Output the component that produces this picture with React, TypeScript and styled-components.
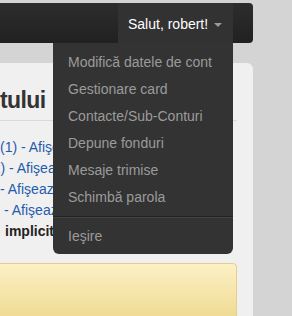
import React from "react";
import styled, { createGlobalStyle } from "styled-components";

const Global = createGlobalStyle`
  html, body {
    margin: 0;
    padding: 0;
    background: #d4d4d4;
    overflow: hidden;
    font-family: "Liberation Sans", Arial, sans-serif;
  }
  * { box-sizing: border-box; }
`;

const Page = styled.div`
  width: 292px;
  height: 316px;
  padding-top: 3px;
  overflow: hidden;
`;

const Navbar = styled.div`
  height: 40px;
  margin: 0 39px 0 -10px;
  border-radius: 4px;
  background: linear-gradient(#2d2d2d, #212121);
  display: flex;
  justify-content: flex-end;
  position: relative;
  z-index: 2;
`;

const NavItem = styled.div`
  position: relative;
  margin-right: 20px;
`;

const Toggle = styled.div`
  height: 40px;
  width: 115px;
  padding: 11px 10px 9px;
  background: #323232;
  display: flex;
  align-items: center;
  gap: 6px;
  color: #fff;
  font-size: 14px;
  line-height: 20px;
  white-space: nowrap;
`;

const Caret = styled.span`
  display: inline-block;
  width: 0;
  height: 0;
  margin-top: 1px;
  border-top: 4px solid #9a9a9a;
  border-left: 4px solid transparent;
  border-right: 4px solid transparent;
`;

const Menu = styled.ul`
  position: absolute;
  top: 100%;
  right: 0;
  width: 180px;
  margin: 0;
  padding: 6px 0 4px;
  list-style: none;
  background: #333;
  border-radius: 0 0 6px 6px;
`;

const MenuItem = styled.li`
  padding: 3px 15px;
  font-size: 14px;
  line-height: 21px;
  color: #9b9b9b;
  white-space: nowrap;
`;

const Divider = styled.li`
  height: 1px;
  margin: 5px 0;
  background: #222;
  border-bottom: 1px solid #444;
  box-sizing: content-box;
`;

const Card = styled.div`
  margin: 20px 39px 0 -20px;
  padding: 22px 16px 0 20px;
  background: #f0f0f0;
  border-radius: 6px;
  height: 400px;
`;

const Heading = styled.h2`
  margin: 0;
  font-size: 23px;
  line-height: 30px;
  font-weight: bold;
  color: #333;
  letter-spacing: -0.6px;
  white-space: nowrap;
`;

const Rule = styled.div`
  margin-top: 5px;
  border-top: 1px solid #dadada;
`;

const List = styled.div`
  margin-top: 16px;
  width: 53px;
  overflow: hidden;
  font-size: 14px;
  line-height: 21px;
`;

const Line = styled.div<{ $indent: number; $bold?: boolean }>`
  margin-left: ${(p) => p.$indent}px;
  white-space: nowrap;
  color: ${(p) => (p.$bold ? "#222" : "#1f5cab")};
  font-weight: ${(p) => (p.$bold ? "bold" : "normal")};
`;

const Alert = styled.div`
  margin-top: 21px;
  height: 60px;
  margin-left: -20px;
  border: 1px solid #e3cf8a;
  border-radius: 4px;
  background: linear-gradient(#fcf1c6, #efda90 55px);
`;

export default function App() {
  return (
    <>
      <Global />
      <Page>
        <Navbar>
          <NavItem>
            <Toggle>
              Salut, robert!
              <Caret />
            </Toggle>
            <Menu>
              <MenuItem>Modifică datele de cont</MenuItem>
              <MenuItem>Gestionare card</MenuItem>
              <MenuItem>Contacte/Sub-Conturi</MenuItem>
              <MenuItem>Depune fonduri</MenuItem>
              <MenuItem>Mesaje trimise</MenuItem>
              <MenuItem>Schimbă parola</MenuItem>
              <Divider />
              <MenuItem>Ieşire</MenuItem>
            </Menu>
          </NavItem>
        </Navbar>
        <Card>
          <Heading>tului</Heading>
          <Rule />
          <List>
            <Line $indent={0}>(1) - Afişează</Line>
            <Line $indent={-12}>(2) - Afişează</Line>
            <Line $indent={0}>- Afişează</Line>
            <Line $indent={4}>- Afişează</Line>
            <Line $indent={5} $bold>
              implicit
            </Line>
          </List>
          <Alert />
        </Card>
      </Page>
    </>
  );
}
